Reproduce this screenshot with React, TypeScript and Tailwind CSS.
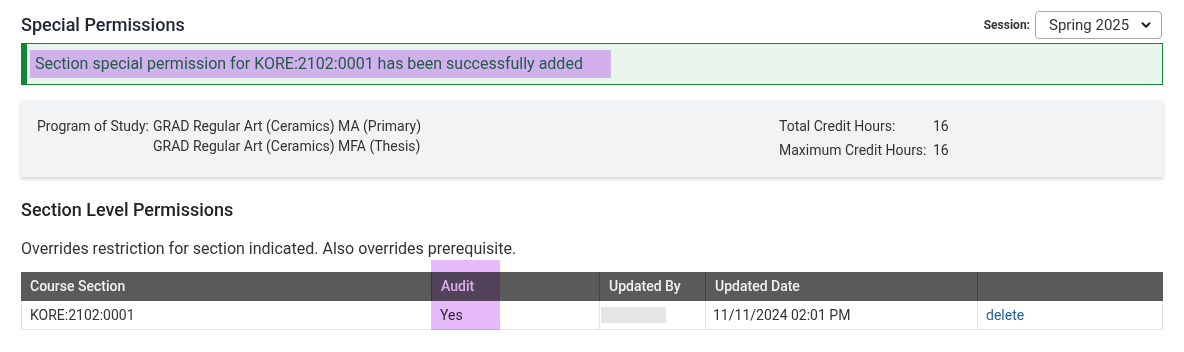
import { ChevronDown } from 'lucide-react';

const columns = [
    { label: 'Course Section', width: 'w-[410px]' },
    { label: 'Audit', width: 'w-[168px]' },
    { label: 'Updated By', width: 'w-[106px]' },
    { label: 'Updated Date', width: 'w-[272px]' },
    { label: '', width: 'w-[186px]' },
];

export default function App() {
    return (
        <div className="w-[1184px] h-[352px] bg-white px-[21px] pt-[11px] font-['Roboto',sans-serif] text-[#212529]">
            {/* header */}
            <div className="flex items-center justify-between h-[28px]">
                <h1 className="text-[18px] font-medium text-[#1f2430] leading-none">Special Permissions</h1>
                <div className="flex items-center gap-[5px] mr-px">
                    <label className="text-[12px] font-bold text-[#333]">Session:</label>
                    <div className="flex items-center justify-between w-[127px] h-[28px] border border-[#a9a9a9] rounded-[4px] pl-[13px] pr-[8px] text-[15px] text-[#333]">
                        Spring 2025
                        <ChevronDown size={14} strokeWidth={3.5} className="text-[#222]" />
                    </div>
                </div>
            </div>

            {/* alert */}
            <div className="mt-[4px] h-[42px] border border-[#17843a] border-l-[6px] bg-[#e8f5ec] flex items-center pl-[3px]">
                <span className="bg-[#d0b1ec] w-[581px] h-[28px] flex items-center pl-[5px] text-[16px] text-[#245a4a]">
                    Section special permission for KORE:2102:0001 has been successfully added
                </span>
            </div>

            {/* program panel */}
            <div className="mt-[16px] h-[76px] bg-[#f2f3f5] shadow-[0_2px_4px_rgba(0,0,0,0.18)] flex items-start pt-[15px] pl-[16px] text-[14px] leading-[20px] text-[#333]">
                <div className="flex-1 grid grid-cols-[auto_1fr] gap-x-[4px] content-start">
                    <span>Program of Study:</span>
                    <span>GRAD Regular Art (Ceramics) MA (Primary)</span>
                    <span></span>
                    <span>GRAD Regular Art (Ceramics) MFA (Thesis)</span>
                </div>
                <div className="w-[384px] grid grid-cols-[154px_1fr] gap-y-[4px] content-start">
                    <span>Total Credit Hours:</span>
                    <span>16</span>
                    <span>Maximum Credit Hours:</span>
                    <span>16</span>
                </div>
            </div>

            <h2 className="mt-[22px] text-[18px] font-medium text-[#222] leading-[22px]">Section Level Permissions</h2>
            <p className="mt-[18px] text-[16px] text-[#333] leading-[20px]">Overrides restriction for section indicated. Also overrides prerequisite.</p>

            {/* table */}
            <div className="relative mt-[13px]">
                <div className="flex h-[29px] bg-[#5a5a5a]">
                    {columns.map((c, i) => (
                        <div key={i} className={`${c.width} flex items-center pl-[9px] text-[14px] font-medium text-[#f2f2f2] ${i > 0 ? 'border-l border-[#444]' : ''}`}>
                            {c.label}
                        </div>
                    ))}
                </div>
                <div className="flex h-[29px] border-b border-x border-[#e3e3e3] text-[14px] text-[#333]">
                    <div className="w-[409px] flex items-center pl-[8px]">KORE:2102:0001</div>
                    <div className="w-[168px] flex items-center pl-[9px]">Yes</div>
                    <div className="w-[106px] flex items-center pl-px border-l border-[#e3e3e3]">
                        <div className="w-[65px] h-[16px] bg-[#e4e5e7]"></div>
                    </div>
                    <div className="w-[272px] flex items-center pl-[7px] border-l border-[#e3e3e3]">11/11/2024 02:01 PM</div>
                    <div className="flex-1 flex items-center pl-[8px] border-l border-[#e3e3e3]">
                        <a className="text-[#1f5f9e]">delete</a>
                    </div>
                </div>
                {/* highlight over Audit column */}
                <div className="absolute left-[410px] top-[-12px] w-[69px] h-[70px] bg-[#e6b9fb] mix-blend-multiply pointer-events-none"></div>
            </div>
        </div>
    );
}
